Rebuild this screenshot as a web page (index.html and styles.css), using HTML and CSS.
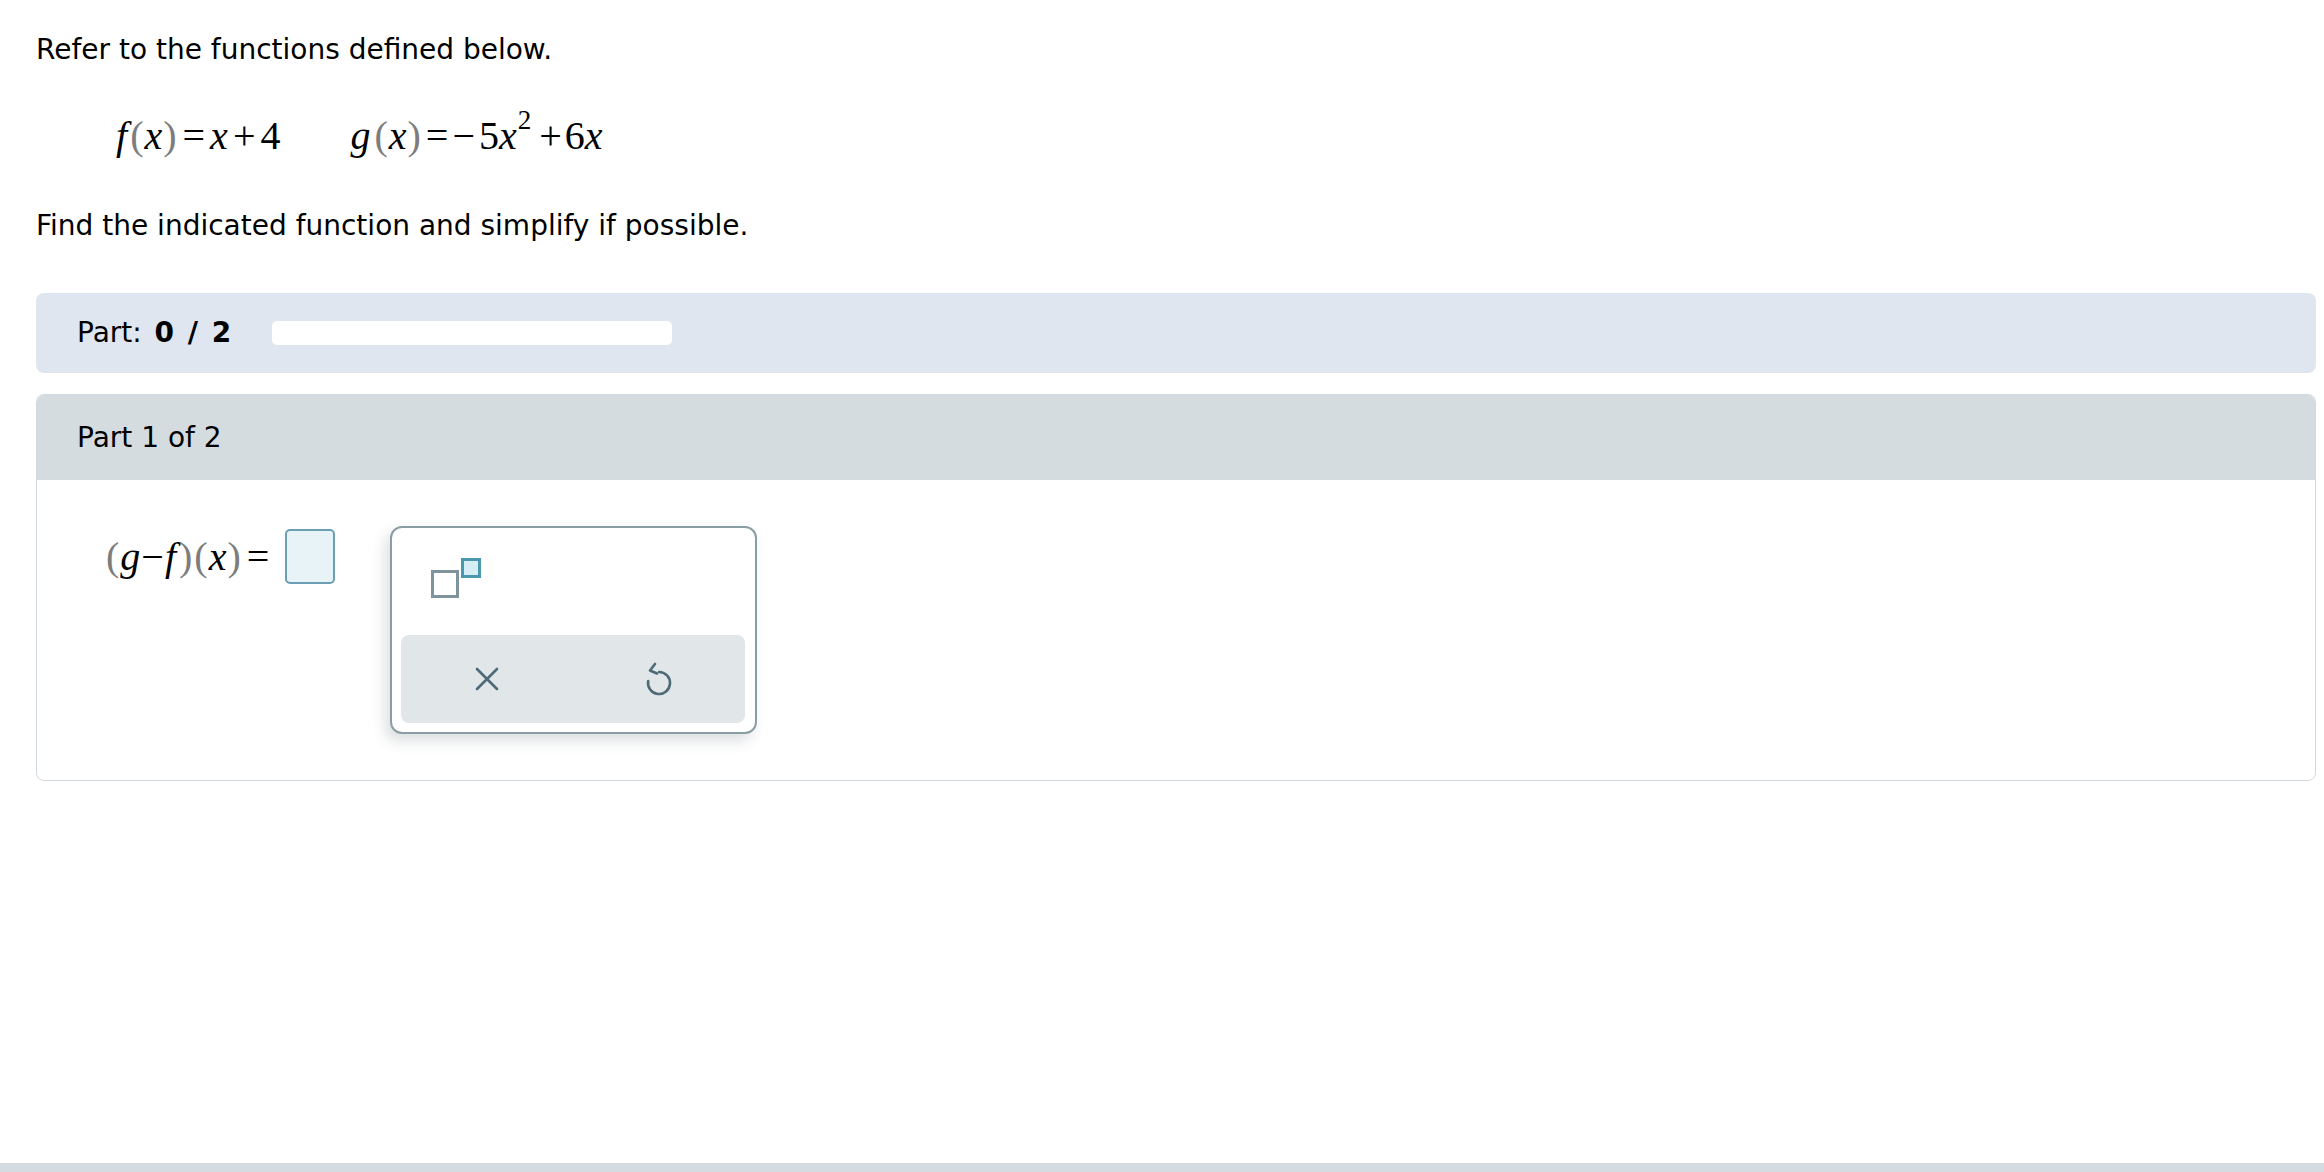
FILE: index.html
```html
<!DOCTYPE html>
<html lang="en">
<head>
<meta charset="utf-8">
<title>Function operations</title>
<link rel="stylesheet" href="styles.css">
</head>
<body>
<main class="page">
  <p class="line">Refer to the functions defined below.</p>
  <div class="defs">
    <span class="eq"><i class="v vf">f</i><span class="paren">(</span><i class="v">x</i><span class="paren">)</span><span class="op">=</span><i class="v">x</i><span class="op">+</span><span class="n">4</span></span>
    <span class="eq eq-g"><i class="v">g</i><span class="paren pg">(</span><i class="v">x</i><span class="paren">)</span><span class="op">=</span><span class="op minus">&minus;</span><span class="n">5</span><i class="v">x</i><sup class="sup">2</sup><span class="op plus">+</span><span class="n">6</span><i class="v">x</i></span>
  </div>
  <p class="line">Find the indicated function and simplify if possible.</p>

  <section class="progress">
    <span class="progress-label">Part: <b class="count">0 <span class="slash">/</span> 2</b></span>
    <span class="progress-track"></span>
  </section>

  <section class="card">
    <header class="card-head">Part 1 of 2</header>
    <div class="card-body">
      <div class="answer-eq">
        <span class="paren">(</span><i class="v">g</i><span class="op tight">&minus;</span><i class="v vf">f</i><span class="paren">)</span><span class="paren">(</span><i class="v">x</i><span class="paren">)</span><span class="op">=</span>
        <span class="answer-box"></span>
      </div>
      <div class="keypad">
        <div class="keypad-top">
          <svg class="sup-icon" width="50" height="40" viewBox="0 0 50 40">
            <rect x="1.5" y="13.5" width="25" height="25" fill="#fff" stroke="#7f939c" stroke-width="3"/>
            <rect x="31.5" y="1.5" width="17" height="17" fill="#d6eef5" stroke="#4a97ae" stroke-width="3"/>
          </svg>
        </div>
        <div class="keypad-bar">
          <span class="key">
            <svg width="24" height="24" viewBox="0 0 24 24">
              <path d="M2 2 L22 22 M22 2 L2 22" stroke="#4e6a76" stroke-width="2.6" stroke-linecap="round" fill="none"/>
            </svg>
          </span>
          <span class="key">
            <svg width="28" height="34" viewBox="0 0 28 34">
              <path d="M14 10 A11 11 0 1 1 3.2 19" stroke="#4e6a76" stroke-width="2.6" stroke-linecap="round" fill="none"/>
              <path d="M10 2 L5 8.5 L12 11.5" stroke="#4e6a76" stroke-width="2.6" stroke-linecap="round" stroke-linejoin="round" fill="none"/>
            </svg>
          </span>
        </div>
      </div>
    </div>
  </section>
</main>
<footer class="strip"></footer>
</body>
</html>
```

FILE: styles.css
```css
html, body {
  height: 100%;
}
body {
  margin: 0;
  font-family: "DejaVu Sans", Verdana, sans-serif;
  font-size: 28px;
  color: #000;
  background: #fff;
  display: flex;
  flex-direction: column;
}
.page {
  flex: 1;
  padding: 34px 8px 0 36px;
}
.line {
  margin: 0;
  line-height: 32px;
}
.defs {
  display: flex;
  gap: 70px;
  margin: 46px 0 50px 80px;
  line-height: 48px;
}
.eq, .answer-eq {
  font-family: "Liberation Serif", "Times New Roman", serif;
  font-size: 40px;
}
.v {
  font-style: italic;
}
.vf {
  margin-right: 2px;
}
.paren {
  color: #7d7d7d;
  margin: 0 1px;
}
.pg {
  margin-left: 4px;
}
.op {
  margin: 0 5px;
}
.eq-g .op {
  margin: 0 4px;
}
.eq-g .op.minus {
  margin-left: 0;
}
.eq-g .op.plus {
  margin: 0 3px 0 8px;
}
.op.tight {
  margin: 0 1px;
}
.sup {
  font-size: 27px;
  vertical-align: 20px;
  line-height: 0;
  margin-left: 1px;
}
.progress {
  margin-top: 51px;
  height: 80px;
  background: #dfe6ef;
  border-radius: 8px;
  display: flex;
  align-items: center;
  padding-left: 41px;
}
.progress-label {
  line-height: 32px;
}
.count {
  margin-left: 4px;
}
.slash {
  margin: 0 4px;
}
.progress-track {
  width: 400px;
  height: 24px;
  background: #fff;
  border-radius: 5px;
  margin-left: 41px;
}
.card {
  margin-top: 21px;
  border: 1px solid #d3dadf;
  border-radius: 8px;
  overflow: hidden;
}
.card-head {
  height: 85px;
  background: #d4dce0;
  padding-left: 40px;
  display: flex;
  align-items: center;
  line-height: 32px;
}
.card-body {
  display: flex;
  align-items: flex-start;
  padding: 46px 0 46px 68px;
}
.answer-eq {
  display: flex;
  align-items: center;
  margin-top: 3px;
  line-height: 48px;
}
.answer-box {
  box-sizing: border-box;
  width: 50px;
  height: 55px;
  margin-left: 11px;
  border: 2px solid #6c9fb4;
  background: #e7f3f7;
  border-radius: 5px;
}
.keypad {
  box-sizing: border-box;
  width: 367px;
  height: 208px;
  margin-left: 55px;
  border: 2px solid #8a9ca4;
  border-radius: 12px;
  background: #fff;
  box-shadow: -5px 7px 14px rgba(40, 60, 70, 0.16);
  padding: 0 10px 9px 9px;
  display: flex;
  flex-direction: column;
}
.keypad-top {
  flex: 1;
  padding: 30px 0 0 30px;
}
.sup-icon {
  display: block;
}
.keypad-bar {
  height: 88px;
  background: #e1e6e9;
  border-radius: 8px;
  display: flex;
}
.key {
  flex: 1;
  display: flex;
  align-items: center;
  justify-content: center;
}
.key svg {
  display: block;
}
.strip {
  height: 9px;
  background: #d5dce1;
}
```
